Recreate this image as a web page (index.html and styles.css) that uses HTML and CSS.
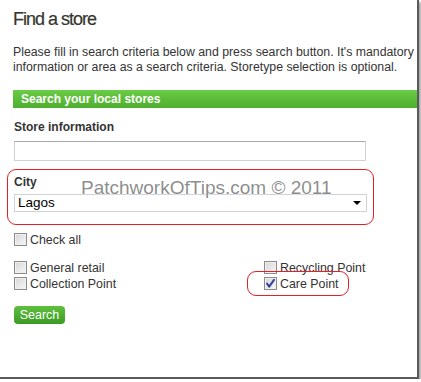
FILE: index.html
```html
<!DOCTYPE html>
<html lang="en">
<head>
<meta charset="utf-8">
<title>Find a store</title>
<link rel="stylesheet" href="styles.css">
</head>
<body>
<div class="sheet">
  <h1 class="title">Find a store</h1>
  <p class="intro">Please fill in search criteria below and press search button. It's mandatory to give store<br>information or area as a search criteria. Storetype selection is optional.</p>
  <div class="panel-head">Search your local stores</div>
  <form class="form">
    <label class="field-label">Store information</label>
    <div class="text-input"></div>
    <div class="city-group">
      <label class="field-label">City</label>
      <div class="select">
        <span class="select-value">Lagos</span>
        <svg class="select-arrow" width="8" height="4" viewBox="0 0 8 4"><path d="M0 0H8L4 4Z" fill="#000"/></svg>
      </div>
    </div>
    <div class="check check-all"><span class="box"></span><span class="check-text">Check all</span></div>
    <div class="types">
      <div class="check"><span class="box"></span><span class="check-text">General retail</span></div>
      <div class="check"><span class="box"></span><span class="check-text">Recycling Point</span></div>
      <div class="check"><span class="box"></span><span class="check-text">Collection Point</span></div>
      <div class="check care"><span class="box checked"><svg width="11" height="11" viewBox="0 0 11 11"><path d="M2 5.5 L4.2 8.6 L9 1.8" fill="none" stroke="#34439a" stroke-width="2" stroke-linecap="round" stroke-linejoin="round"/></svg></span><span class="check-text">Care Point</span></div>
    </div>
    <div class="search-btn">Search</div>
  </form>
  <div class="watermark">PatchworkOfTips.com © 2011</div>
</div>
</body>
</html>
```
FILE: styles.css
```css
html, body {
  margin: 0;
  padding: 0;
  background: #fff;
}
.sheet {
  position: relative;
  box-sizing: border-box;
  width: 419px;
  height: 379px;
  padding: 8px 0 0 13px;
  overflow: hidden;
  background: #fff;
  border-right: 2px solid #5a5a5a;
  border-bottom: 2px solid #5a5a5a;
  box-shadow: 2px 2px 2px rgba(0,0,0,0.35);
  font-family: "Liberation Sans", Arial, sans-serif;
  color: #333;
}
.title {
  margin: 0;
  font-size: 18px;
  line-height: 22px;
  font-weight: normal;
  letter-spacing: -1px;
  color: #35362d;
  -webkit-text-stroke: 0.2px #35362d;
}
.intro {
  margin: 15px 0 0 0;
  width: 560px;
  font-size: 12.3px;
  line-height: 15px;
  color: #333;
}
.panel-head {
  margin-top: 15px;
  height: 18px;
  width: 420px;
  box-sizing: border-box;
  padding-left: 8px;
  background: linear-gradient(#6acb45, #4eae2f);
  color: #fff;
  font-weight: bold;
  font-size: 12px;
  line-height: 18px;
}
.form {
  padding-left: 1px;
  display: flex;
  flex-direction: column;
  align-items: flex-start;
}
.field-label {
  display: block;
  margin-top: 12px;
  font-size: 12px;
  line-height: 15px;
  font-weight: bold;
  color: #333;
}
.text-input {
  margin-top: 6px;
  width: 352px;
  height: 20px;
  box-sizing: border-box;
  border: 1px solid #d2d2d2;
  border-top-color: #a8a8a8;
  background: #fff;
}
.city-group {
  position: relative;
  margin-top: 2px;
}
.city-group::before {
  content: "";
  position: absolute;
  left: -7px;
  top: 6px;
  width: 367px;
  height: 56px;
  box-sizing: border-box;
  border: 1px solid #e3202a;
  border-radius: 9px;
}
.select {
  margin-top: 4px;
  width: 353px;
  height: 18px;
  box-sizing: border-box;
  border: 1px solid #cfd3d8;
  background: #fff;
  display: flex;
  align-items: center;
  justify-content: space-between;
  padding: 0 5px 0 3px;
}
.select-value {
  font-size: 13.5px;
  color: #000;
  line-height: 16px;
}
.select-arrow {
  display: block;
}
.check {
  display: flex;
  align-items: flex-start;
  height: 16px;
  font-size: 12.4px;
  line-height: 16px;
  color: #333;
}
.check-all {
  margin-top: 20px;
}
.box {
  flex: none;
  box-sizing: border-box;
  width: 13px;
  height: 13px;
  margin: 1px 3px 0 0;
  border: 1px solid #8c8c8c;
  background: linear-gradient(135deg, #d6d6d6, #f7f7f7);
  box-shadow: inset 0 0 0 1px #f0f0f0;
  display: flex;
  align-items: center;
  justify-content: center;
}
.box.checked svg {
  display: block;
}
.types {
  margin-top: 12px;
  display: grid;
  grid-template-columns: 250px auto;
}
.care {
  position: relative;
}
.care::after {
  content: "";
  position: absolute;
  left: -17px;
  top: -5px;
  width: 102px;
  height: 25px;
  box-sizing: border-box;
  border: 1px solid #e3202a;
  border-radius: 9px;
}
.search-btn {
  margin-top: 14px;
  width: 51px;
  height: 18px;
  box-sizing: border-box;
  border-radius: 4px;
  background: linear-gradient(#5fc03f, #3a9a24);
  color: #fff;
  font-size: 12.5px;
  line-height: 18px;
  text-align: center;
}
.watermark {
  position: absolute;
  left: 81px;
  top: 177px;
  font-size: 19px;
  line-height: 22px;
  color: rgba(120,120,120,0.85);
  text-shadow: 0 0 1px #fff, 0 0 2px #fff;
  white-space: nowrap;
}
```
